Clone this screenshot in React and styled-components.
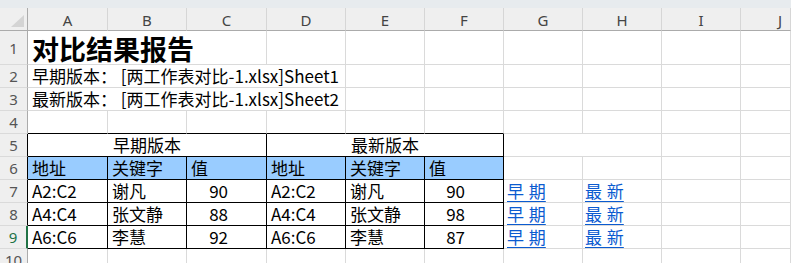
import React from "react";
import styled, { createGlobalStyle } from "styled-components";

const GRID = "#dadada";
const INK = "#000000";
const HEAD_BG = "#efefef";
const HEAD_LINE = "#ababab";
const FONT = `"Noto Sans CJK SC", "Noto Sans", sans-serif`;

const Global = createGlobalStyle`
  html, body { margin: 0; padding: 0; background: #ffffff; overflow: hidden; }
  body { font-family: ${FONT}; }
`;

const Sheet = styled.div`
  display: grid;
  grid-template-columns: 28px 80px 79px 80px repeat(6, 79px) 1fr;
  grid-template-rows: 8px 23px 34px repeat(9, 23px);
  width: 791px;
  height: 263px;
  overflow: hidden;
  background: #ffffff;
`;

const TopStrip = styled.div`
  grid-column: 1 / -1;
  background: #e7ebee;
`;

const Corner = styled.div`
  position: relative;
  background: ${HEAD_BG};
  border-right: 1px solid ${HEAD_LINE};
  border-bottom: 1px solid ${HEAD_LINE};
  box-sizing: border-box;
  &::after {
    content: "";
    position: absolute;
    right: 3px;
    bottom: 3px;
    width: 0;
    height: 0;
    border-left: 13px solid transparent;
    border-bottom: 12px solid #d4d4d4;
  }
`;

const ColHead = styled.div`
  box-sizing: border-box;
  background: ${HEAD_BG};
  border-right: 1px solid #d6d6d6;
  border-bottom: 1px solid ${HEAD_LINE};
  display: flex;
  align-items: center;
  justify-content: ${(p) => (p.$end ? "flex-end" : "center")};
  padding: 2px ${(p) => (p.$end ? "8px" : "0")} 0 0;
  font-family: "Noto Sans", sans-serif;
  font-size: 15px;
  line-height: 18px;
  color: #444444;
`;

const RowHead = styled.div`
  box-sizing: border-box;
  background: ${HEAD_BG};
  border-right: ${(p) => (p.$active ? "2px solid #217346" : `1px solid ${p.$rb || HEAD_LINE}`)};
  border-bottom: 1px solid ${GRID};
  display: flex;
  align-items: center;
  justify-content: center;
  font-family: "Noto Sans", sans-serif;
  font-size: 15px;
  line-height: 18px;
  color: ${(p) => (p.$active ? "#217346" : "#555555")};
`;

const Cell = styled.div`
  box-sizing: border-box;
  min-width: 0;
  grid-column: ${(p) => (p.$span ? `span ${p.$span}` : "auto")};
  background: ${(p) => p.$bg || "#ffffff"};
  border-right: 1px solid ${(p) => p.$rb || GRID};
  border-bottom: 1px solid ${(p) => p.$bb || GRID};
  display: flex;
  align-items: center;
  justify-content: ${(p) =>
    p.$align === "center" ? "center" : p.$align === "right" ? "flex-end" : "flex-start"};
  padding: 0 ${(p) => (p.$align === "right" ? "38px" : "0")} 0
    ${(p) => (p.$align === "left" || !p.$align ? "4px" : "0")};
  white-space: nowrap;
  font-family: ${FONT};
  font-size: 17px;
  line-height: 20px;
  color: #000000;
`;

const Title = styled.span`
  font-size: 27px;
  font-weight: 700;
  line-height: 28px;
  padding-top: 3px;
`;

const Link = styled.a`
  color: #0b5bd0;
  text-decoration: underline;
  text-underline-offset: 3px;
  margin-left: ${(p) => p.$shift}px;
  word-spacing: 1px;
  cursor: pointer;
`;

const COLS = ["A", "B", "C", "D", "E", "F", "G", "H", "I", "J"];

const blanks = (n, key, props = {}) =>
  Array.from({ length: n }, (_, i) => <Cell key={`${key}-${i}`} {...props} />);

const rows = [
  { addr: "A2:C2", name: "谢凡", v1: 90, v2: 90 },
  { addr: "A4:C4", name: "张文静", v1: 88, v2: 98 },
  { addr: "A6:C6", name: "李慧", v1: 92, v2: 87 },
];

const BLUE = "#99ccff";

export default function App() {
  return (
    <>
      <Global />
      <Sheet>
        <TopStrip />
        <Corner />
        {COLS.map((c, i) => (
          <ColHead key={c} $end={i === COLS.length - 1}>
            {c}
          </ColHead>
        ))}

        {/* Row 1 */}
        <RowHead>1</RowHead>
        <Cell $span={3}>
          <Title>对比结果报告</Title>
        </Cell>
        {blanks(7, "r1")}

        {/* Row 2 */}
        <RowHead>2</RowHead>
        <Cell $span={4}>早期版本： [两工作表对比-1.xlsx]Sheet1</Cell>
        {blanks(6, "r2")}

        {/* Row 3 */}
        <RowHead>3</RowHead>
        <Cell $span={4}>最新版本： [两工作表对比-1.xlsx]Sheet2</Cell>
        {blanks(6, "r3")}

        {/* Row 4 */}
        <RowHead>4</RowHead>
        {blanks(6, "r4a", { $bb: INK })}
        {blanks(4, "r4b")}

        {/* Row 5 */}
        <RowHead $rb={INK}>5</RowHead>
        <Cell $span={3} $align="center" $rb={INK} $bb={INK}>
          早期版本
        </Cell>
        <Cell $span={3} $align="center" $rb={INK} $bb={INK}>
          最新版本
        </Cell>
        <Cell $span={2} />
        {blanks(2, "r5")}

        {/* Row 6 */}
        <RowHead $rb={INK}>6</RowHead>
        {["地址", "关键字", "值", "地址", "关键字", "值"].map((t, i) => (
          <Cell key={`h${i}`} $bg={BLUE} $rb={INK} $bb={INK}>
            {t}
          </Cell>
        ))}
        {blanks(4, "r6")}

        {rows.map((r, i) => (
          <React.Fragment key={r.addr}>
            <RowHead $rb={INK} $active={i === 2}>
              {7 + i}
            </RowHead>
            <Cell $rb={INK} $bb={INK}>{r.addr}</Cell>
            <Cell $rb={INK} $bb={INK}>{r.name}</Cell>
            <Cell $rb={INK} $bb={INK} $align="right">{r.v1}</Cell>
            <Cell $rb={INK} $bb={INK}>{r.addr}</Cell>
            <Cell $rb={INK} $bb={INK}>{r.name}</Cell>
            <Cell $rb={INK} $bb={INK} $align="right">{r.v2}</Cell>
            <Cell>
              <Link $shift={-1}>早 期</Link>
            </Cell>
            <Cell>
              <Link $shift={-2}>最 新</Link>
            </Cell>
            <Cell />
            <Cell />
          </React.Fragment>
        ))}

        {/* Row 10 */}
        <RowHead>10</RowHead>
        {blanks(10, "r10")}
      </Sheet>
    </>
  );
}
